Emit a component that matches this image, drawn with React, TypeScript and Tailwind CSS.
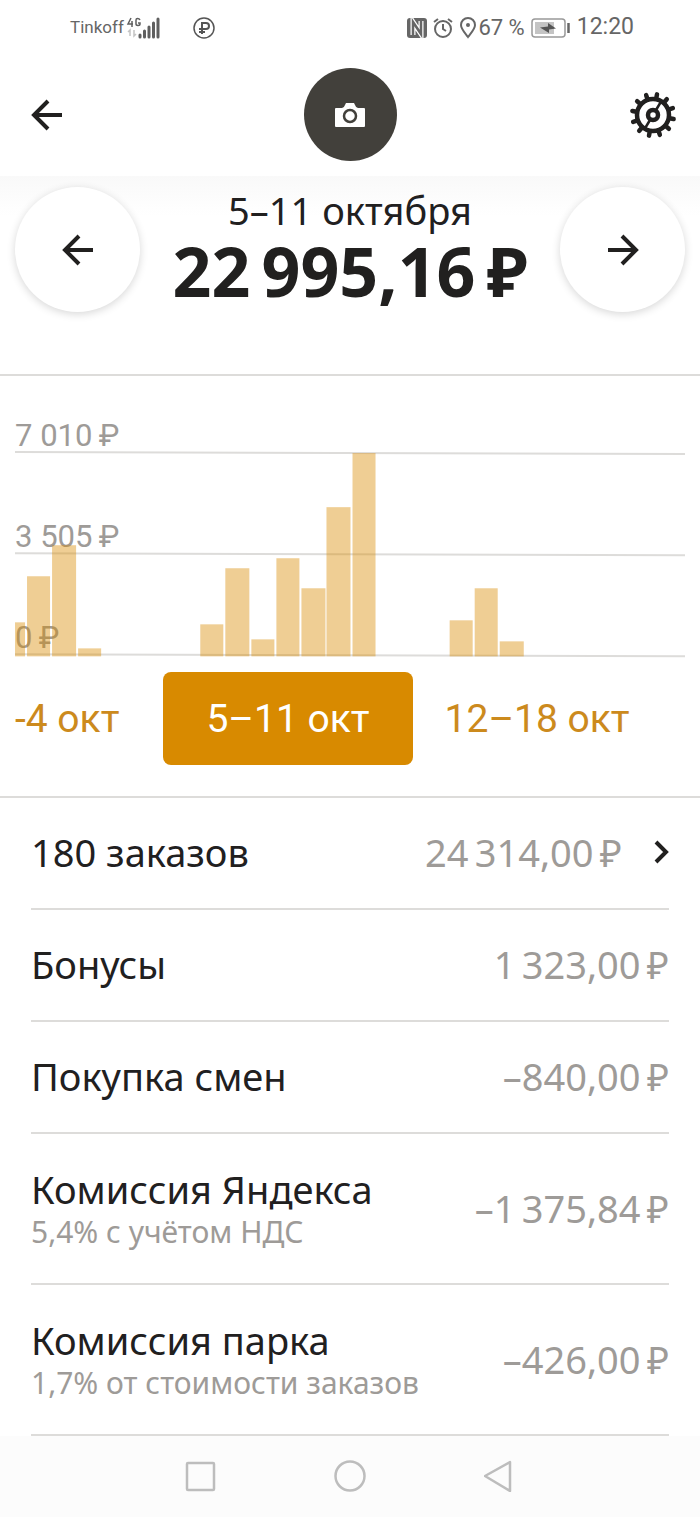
import React from 'react';

interface Bar {
    x: number;
    width: number;
    height: number;
}

interface RowProps {
    title: string;
    note?: string;
    amount: string;
    link?: boolean;
}

const bars: Bar[] = [
    { x: 0, width: 10, height: 34 },
    { x: 12, width: 23, height: 80 },
    { x: 37, width: 24, height: 111 },
    { x: 63, width: 23, height: 8 },
    { x: 185, width: 23, height: 32 },
    { x: 210, width: 24, height: 88 },
    { x: 236, width: 23, height: 17 },
    { x: 261, width: 23, height: 98 },
    { x: 286, width: 24, height: 68 },
    { x: 311, width: 24, height: 149 },
    { x: 337, width: 23, height: 203 },
    { x: 434, width: 23, height: 36 },
    { x: 459, width: 23, height: 68 },
    { x: 484, width: 24, height: 15 },
];

const gridLines = [
    { label: '7 010\u2009₽', y: 52 },
    { label: '3 505\u2009₽', y: 153 },
    { label: '0\u2009₽', y: 254 },
];

const rows: RowProps[] = [
    { title: '180 заказов', amount: '24\u2009314,00\u2009₽', link: true },
    { title: 'Бонусы', amount: '1\u2009323,00\u2009₽' },
    { title: 'Покупка смен', amount: '–840,00\u2009₽' },
    { title: 'Комиссия Яндекса', note: '5,4% с учётом НДС', amount: '–1\u2009375,84\u2009₽' },
    { title: 'Комиссия парка', note: '1,7% от стоимости заказов', amount: '–426,00\u2009₽' },
];

const teeth = [11, 41, 71, 101, 131, 161, 191, 221, 251, 281, 311, 341];

const Arrow = ({ flip = false }: { flip?: boolean }) => (
    <svg width="32" height="32" viewBox="0 0 32 32" fill="none" stroke="#21201f" strokeWidth="4" className={flip ? 'rotate-180' : ''}>
        <path d="M31 16H3M17 2L3 16l14 14" />
    </svg>
);

const Gear = () => (
    <svg width="48" height="48" viewBox="0 0 48 48" fill="none" stroke="#21201f">
        <circle cx="24" cy="24" r="16" strokeWidth="4.5" />
        <circle cx="24" cy="24" r="5" strokeWidth="4.5" />
        <path d="M27 19l6-10M21 29l-6 10" strokeWidth="2.5" />
        {teeth.map((angle) => (
            <path key={angle} d="M24 7V3" strokeWidth="4.5" strokeLinecap="round" transform={`rotate(${angle} 24 24)`} />
        ))}
    </svg>
);

const StatusBar = () => (
    <div className="flex h-[53px] items-center justify-between pl-[70px] pr-[66px] pt-0.5 font-['Roboto',sans-serif] text-[#666]">
        <div className="flex items-center">
            <span className="text-[17px]">Tinkoff</span>
            <svg width="36" height="24" viewBox="0 0 36 24" fill="none" stroke="#606060">
                <path d="M7 2L4 8h5M8 5v6M16 4c-1-2-4-2-4 0v4c0 2 4 2 4 0V7h-2" strokeWidth="1.5" />
                <path d="M6 20v-6l-2 2M10 14v6l2-2" stroke="#c4c4c4" strokeWidth="1.5" />
                <path d="M16 19v2M20.5 15v6M25 11v10M29.5 7v14M34 3v18" strokeWidth="3" strokeLinecap="round" />
            </svg>
            <svg width="24" height="24" viewBox="0 0 24 24" fill="none" stroke="#555" className="ml-8">
                <circle cx="12" cy="12" r="10" strokeWidth="1.5" />
                <path d="M10 18V7h4a3 3 0 0 1 0 6H7M7 16h6" strokeWidth="2" />
            </svg>
        </div>
        <div className="flex items-center">
            <svg width="22" height="22" viewBox="0 0 22 22" fill="none" className="mr-1">
                <rect x="1" y="1" width="20" height="20" rx="3" fill="#666" />
                <path d="M7 18V5l8 12V4" stroke="#fff" strokeWidth="5" />
                <path d="M7 20V5l8 12V2" stroke="#666" strokeWidth="2.5" />
            </svg>
            <svg width="22" height="22" viewBox="0 0 22 22" fill="none" stroke="#666" strokeWidth="2" className="mr-1">
                <circle cx="11" cy="12" r="8" />
                <path d="M11 7v5l3 2M2 5l4-3M20 5l-4-3" />
            </svg>
            <svg width="20" height="22" viewBox="0 0 20 22" fill="none" stroke="#666" strokeWidth="2">
                <path d="M10 20C7 16 3 12 3 8a7 7 0 0 1 14 0c0 4-4 8-7 12z" />
                <circle cx="10" cy="8" r="2" fill="#666" stroke="none" />
            </svg>
            <span className="text-[22px]">67 %</span>
            <svg width="40" height="20" viewBox="0 0 40 20" className="mx-1.5">
                <rect x="1" y="1" width="33" height="18" rx="3" fill="none" stroke="#999" strokeWidth="1.5" />
                <rect x="4" y="4" width="19" height="12" fill="#c4c4c4" />
                <path d="M9 9.5l8-1V5l8 5.500-7 1V15z" fill="#555" />
                <path d="M37.5 5v10" stroke="#666" strokeWidth="2.5" />
            </svg>
            <span className="text-[23px]">12:20</span>
        </div>
    </div>
);

const Chart = () => (
    <svg viewBox="0 0 669 258" className="block w-full font-['Roboto',sans-serif]" role="img" aria-label="Доход по дням">
        {gridLines.map(({ label, y }) => (
            <g key={y}>
                <path d={`M0 ${y}L669 ${y + 2}`} stroke="#dddcda" strokeWidth="2" />
                <text x="0" y={y - 6} fontSize="31" fill="#9e9b98">{label}</text>
            </g>
        ))}
        {bars.map(({ x, width, height }) => (
            <rect key={x} x={x} y={256 - height} width={width} height={height} fill="#d88a00" fillOpacity="0.42" />
        ))}
    </svg>
);

const Row: React.FC<RowProps> = ({ title, note, amount, link }) => (
    <li className={`flex items-center justify-between border-b-2 border-[#dddcda] pb-0.5 ${note ? 'h-[151px]' : 'h-[112px]'}`}>
        <div>
            <p className="text-[38px] leading-[48px]">{title}</p>
            {note && <p className="text-[30px] leading-[38px] text-[#9e9b98]">{note}</p>}
        </div>
        <div className="flex items-center text-[38px] leading-[48px] text-[#9e9b98]">
            {amount}
            {link && (
                <button aria-label="Открыть заказы" className="ml-8">
                    <svg width="15" height="24" viewBox="0 0 15 24" fill="none" stroke="#21201f" strokeWidth="4">
                        <path d="M2 2l10 10L2 22" />
                    </svg>
                </button>
            )}
        </div>
    </li>
);

const App: React.FC = () => {
    return (
        <div className="overflow-hidden bg-white font-['Noto_Sans',sans-serif] text-[#21201f]">
            <StatusBar />

            <header className="flex h-[123px] items-center justify-between pl-[31px] pr-[23px]">
                <button aria-label="Назад" className="flex w-10">
                    <Arrow />
                </button>
                <button aria-label="Фото профиля" className="flex size-[93px] items-center justify-center rounded-full bg-[#42403b]">
                    <svg width="30" height="24" viewBox="0 0 30 24">
                        <path d="M1 5h6q2 0 3-3l1-2h8l1 2q1 3 3 3h6q1 0 1 1v17q0 1-1 1H1q-1 0-1-1V6q0-1 1-1z" fill="#fff" />
                        <circle cx="15" cy="13" r="6" fill="none" stroke="#42403b" strokeWidth="2.5" />
                    </svg>
                </button>
                <button aria-label="Настройки" className="flex">
                    <Gear />
                </button>
            </header>

            <section className="flex h-[200px] items-start justify-between border-b-2 border-[#dddcda] bg-linear-to-b from-[#f9f9f9] to-white to-20% px-[15px] pt-[11px]">
                <button aria-label="Предыдущая неделя" className="flex size-[125px] items-center justify-center rounded-full bg-white shadow-[0_2px_8px_rgba(0,0,0,0.16)]">
                    <Arrow />
                </button>
                <div className="text-center">
                    <p className="text-[38px] leading-[46px]">5–11 октября</p>
                    <h1 className="whitespace-nowrap text-[68px] font-bold leading-[76px]">{'22\u2009995,16\u2009₽'}</h1>
                </div>
                <button aria-label="Следующая неделя" className="flex size-[125px] items-center justify-center rounded-full bg-white shadow-[0_2px_8px_rgba(0,0,0,0.16)]">
                    <Arrow flip />
                </button>
            </section>

            <section className="border-b-2 border-[#dddcda] pb-[31px] pt-6">
                <div className="px-[15px]">
                    <Chart />
                </div>
                <div className="mt-3.5 flex items-center px-[15px] font-['Roboto',sans-serif] text-[39px] text-[#cc8a1d]">
                    <button className="mr-11 whitespace-nowrap">-4 окт</button>
                    <button className="h-[93px] whitespace-nowrap rounded-lg bg-[#d88a00] px-[43px] text-white">5–11 окт</button>
                    <button className="ml-8 whitespace-nowrap">12–18 окт</button>
                </div>
            </section>

            <ul className="px-[31px]">
                {rows.map((row) => (
                    <Row key={row.title} {...row} />
                ))}
            </ul>

            <nav className="flex h-[82px] items-center justify-center gap-[118px] bg-[#fcfcfc] pb-0.5">
                <button aria-label="Недавние">
                    <svg width="32" height="32" viewBox="0 0 32 32" fill="none" stroke="#bdbdbd" strokeWidth="2.5">
                        <rect x="3" y="3" width="27" height="27" rx="1" />
                    </svg>
                </button>
                <button aria-label="Домой">
                    <svg width="32" height="32" viewBox="0 0 32 32" fill="none" stroke="#bdbdbd" strokeWidth="2.5">
                        <circle cx="16" cy="16" r="14.5" />
                    </svg>
                </button>
                <button aria-label="Назад в системе">
                    <svg width="32" height="32" viewBox="0 0 32 32" fill="none" stroke="#bdbdbd" strokeWidth="2.5" strokeLinejoin="round">
                        <path d="M26 2v29L1 16z" />
                    </svg>
                </button>
            </nav>
        </div>
    );
};

export default App;
